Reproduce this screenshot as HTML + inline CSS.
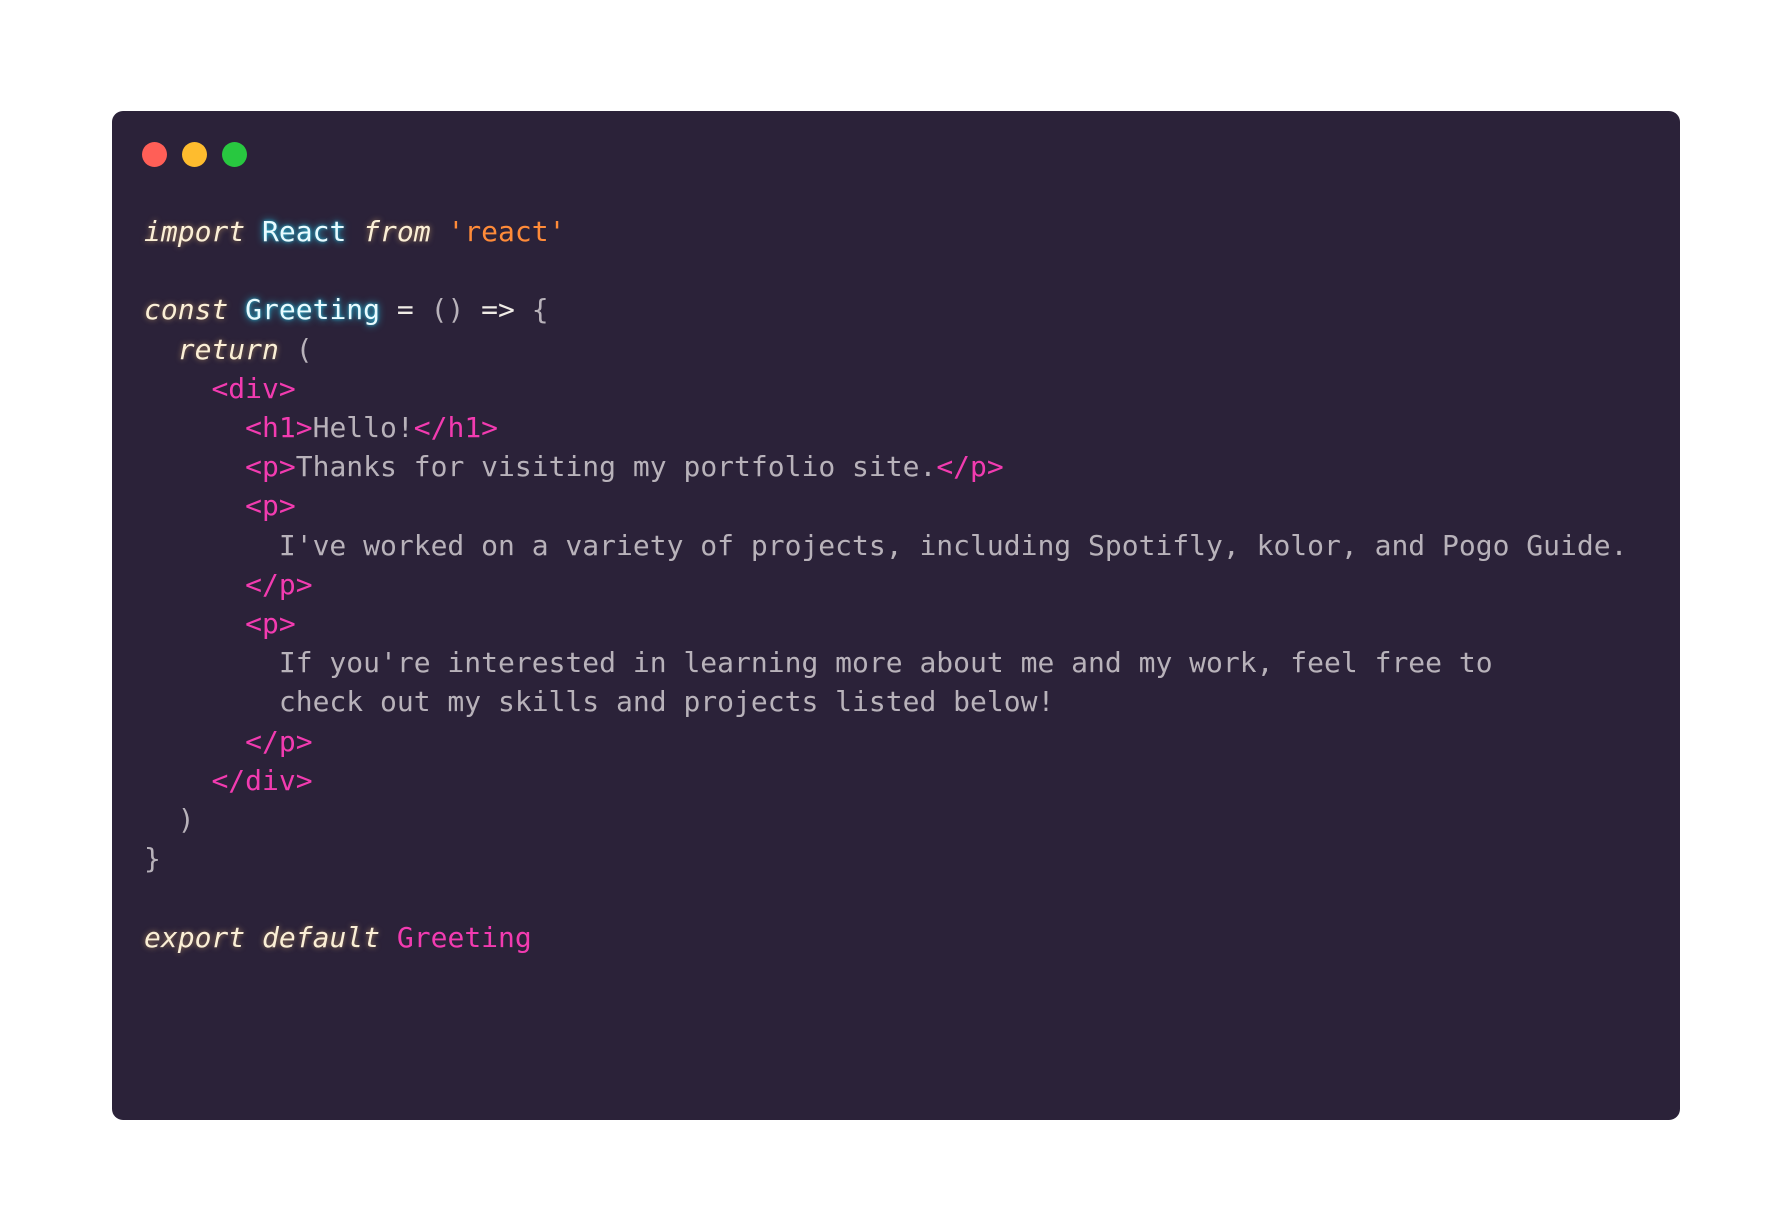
<!DOCTYPE html>
<html><head><meta charset="utf-8"><style>
html,body{margin:0;padding:0;background:#fff;width:1792px;height:1230px;overflow:hidden}
.win{position:absolute;left:112px;top:111px;width:1568px;height:1009px;background:#2b2239;border-radius:11px}
.dot{position:absolute;top:142px;width:25px;height:25px;border-radius:50%}
pre{position:absolute;left:144px;top:212px;margin:0;font-family:"DejaVu Sans Mono","Liberation Mono",monospace;font-size:28px;line-height:39.2px;color:#b8b2ba}
.k{font-style:italic;color:#fbefd6;text-shadow:0 0 6px rgba(255,200,120,.55)}
.n{color:#e8fbff;text-shadow:0 0 8px rgba(40,220,255,.85),0 0 3px rgba(40,220,255,.6)}
.s{color:#ff8b39}
.t{color:#f23bb0}
.o{color:#f0ece6}
</style></head><body>
<div class="win"></div>
<div class="dot" style="left:142px;background:#ff5f57"></div>
<div class="dot" style="left:182px;background:#febc2e"></div>
<div class="dot" style="left:222px;background:#28c840"></div>
<pre><span class="k">import</span> <span class="n">React</span> <span class="k">from</span> <span class="s">'react'</span>

<span class="k">const</span> <span class="n">Greeting</span> <span class="o">=</span> () <span class="o">=&gt;</span> {
  <span class="k">return</span> (
    <span class="t">&lt;div&gt;</span>
      <span class="t">&lt;h1&gt;</span>Hello!<span class="t">&lt;/h1&gt;</span>
      <span class="t">&lt;p&gt;</span>Thanks for visiting my portfolio site.<span class="t">&lt;/p&gt;</span>
      <span class="t">&lt;p&gt;</span>
        I've worked on a variety of projects, including Spotifly, kolor, and Pogo Guide.
      <span class="t">&lt;/p&gt;</span>
      <span class="t">&lt;p&gt;</span>
        If you're interested in learning more about me and my work, feel free to
        check out my skills and projects listed below!
      <span class="t">&lt;/p&gt;</span>
    <span class="t">&lt;/div&gt;</span>
  )
}

<span class="k">export</span> <span class="k">default</span> <span class="t">Greeting</span></pre>
</body></html>
